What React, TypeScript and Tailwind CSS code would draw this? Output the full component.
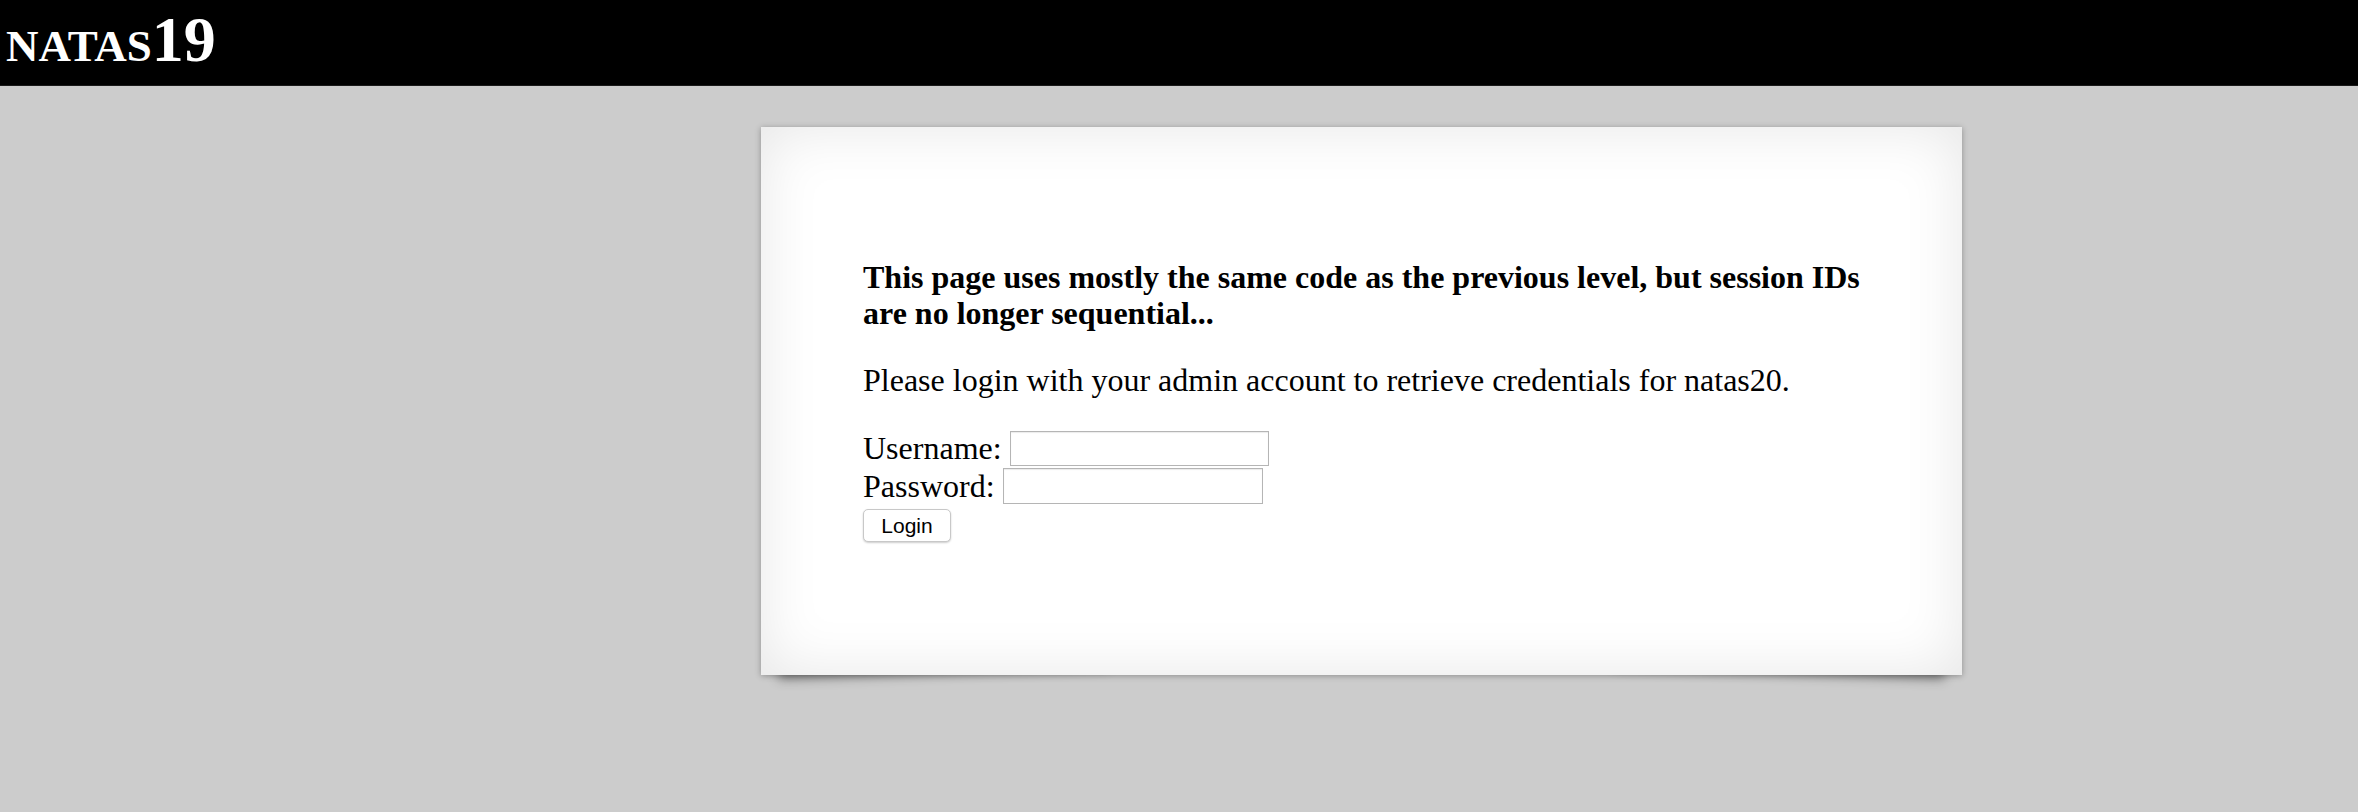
import React from 'react';

const App: React.FC = () => {
  return (
    <div className="min-h-[812px] bg-[#cccccc] font-['Liberation_Serif',serif] text-black">
      <div className="h-[86px] bg-black border-b border-[#1a1a1a]">
        <h1 className="pl-[6px] pt-[2px] text-[64px] leading-[76px] font-bold text-white [font-variant:small-caps]">
          natas19
        </h1>
      </div>

      <div className="relative z-0 pt-[41px] pb-[40px]">
        <div className="relative ml-[761px] w-[1201px] h-[548px] bg-white pt-[132px] px-[102px] shadow-[0_1px_6px_rgba(0,0,0,0.3),inset_0_0_60px_rgba(0,0,0,0.1)] before:content-[''] before:absolute before:-z-10 before:bottom-[18px] before:left-[15px] before:w-1/2 before:max-w-[330px] before:h-[20%] before:shadow-[0_16px_12px_rgba(0,0,0,0.45)] before:-rotate-2 after:content-[''] after:absolute after:-z-10 after:bottom-[18px] after:right-[15px] after:w-1/2 after:max-w-[330px] after:h-[20%] after:shadow-[0_16px_12px_rgba(0,0,0,0.45)] after:rotate-2">
          <p className="text-[32px] leading-[36px] font-bold">
            This page uses mostly the same code as the previous level, but session IDs are no longer sequential...
          </p>
          <p className="mt-[31px] text-[32px] leading-[36px]">
            Please login with your admin account to retrieve credentials for natas20.
          </p>
          <form className="mt-[31px] text-[32px]" onSubmit={(e) => e.preventDefault()}>
            <div className="flex items-center h-[38px]">
              <span>Username:</span>
              <input
                type="text"
                className="ml-[8px] w-[259px] h-[35px] border border-[#b5b5b5] bg-white shadow-[inset_0_1px_1px_rgba(0,0,0,0.08)] outline-none"
              />
            </div>
            <div className="flex items-center h-[38px]">
              <span>Password:</span>
              <input
                type="password"
                className="ml-[8px] w-[260px] h-[36px] border border-[#b5b5b5] bg-white shadow-[inset_0_1px_1px_rgba(0,0,0,0.08)] outline-none"
              />
            </div>
            <button
              type="submit"
              className="block mt-[4px] w-[88px] h-[33px] rounded-[5px] border border-[#c8c8c8] bg-white font-['Liberation_Sans',Arial,sans-serif] text-[21px] leading-none text-black shadow-[0_1px_2px_rgba(0,0,0,0.2)]"
            >
              Login
            </button>
          </form>
        </div>
      </div>
    </div>
  );
};

export default App;
